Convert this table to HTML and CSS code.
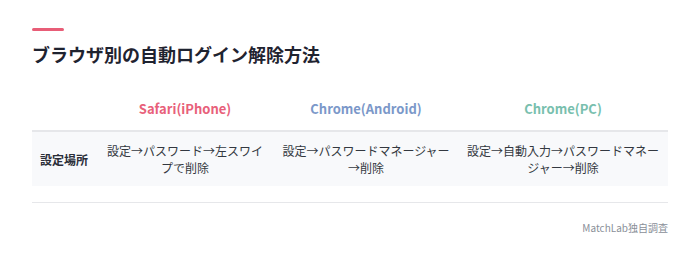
FILE: index.html
```html
<!DOCTYPE html>
<html lang="ja">
<head>
<meta charset="utf-8">
<link rel="stylesheet" href="styles.css">
</head>
<body>
<section class="card">
  <div class="accent"></div>
  <h2 class="title">ブラウザ別の自動ログイン解除方法</h2>
  <div class="table">
    <div class="row head">
      <div class="cell label"></div>
      <div class="cell c-safari">Safari(iPhone)</div>
      <div class="cell c-android">Chrome(Android)</div>
      <div class="cell c-pc">Chrome(PC)</div>
    </div>
    <div class="row body">
      <div class="cell label">設定場所</div>
      <div class="cell">設定→パスワード→左スワイプで削除</div>
      <div class="cell">設定→パスワードマネージャー→削除</div>
      <div class="cell">設定→自動入力→パスワードマネージャー→削除</div>
    </div>
  </div>
  <div class="source">MatchLab独自調査</div>
</section>
</body>
</html>
```

FILE: styles.css
```css
html, body {
  margin: 0;
  padding: 0;
  background: #ffffff;
}
body {
  font-family: "Noto Sans CJK JP", "Noto Sans", sans-serif;
  color: #333840;
}
.card {
  padding: 28px 32px 0 32px;
}
.accent {
  width: 32px;
  height: 3px;
  background: #e85d77;
  border-radius: 2px;
}
.title {
  margin: 10px 0 0 0;
  font-size: 18px;
  line-height: 26px;
  font-weight: 700;
  color: #1f2330;
}
.table {
  margin-top: 21px;
  padding-bottom: 16px;
  border-bottom: 1px solid #e6e7ea;
}
.row {
  display: grid;
  grid-template-columns: 64px 178px 184px 210px;
}
.head {
  border-bottom: 2px solid #e6e7ea;
}
.head .cell {
  font-size: 13px;
  font-weight: 700;
  line-height: 20px;
  padding: 11px 8px 11px;
  text-align: center;
}
.c-safari { color: #e8607a; }
.c-android { color: #7b98c9; }
.c-pc { color: #79bfae; }
.body {
  background: #f8f9fb;
}
.body .cell {
  font-size: 12px;
  line-height: 17px;
  padding: 10px 8px;
  text-align: center;
  display: flex;
  align-items: center;
  justify-content: center;
}
.body .label {
  font-weight: 700;
  color: #2a2e38;
  padding: 10px 0;
}
.source {
  margin-top: 18px;
  text-align: right;
  font-size: 10px;
  line-height: 14px;
  color: #8a8f99;
}
```
